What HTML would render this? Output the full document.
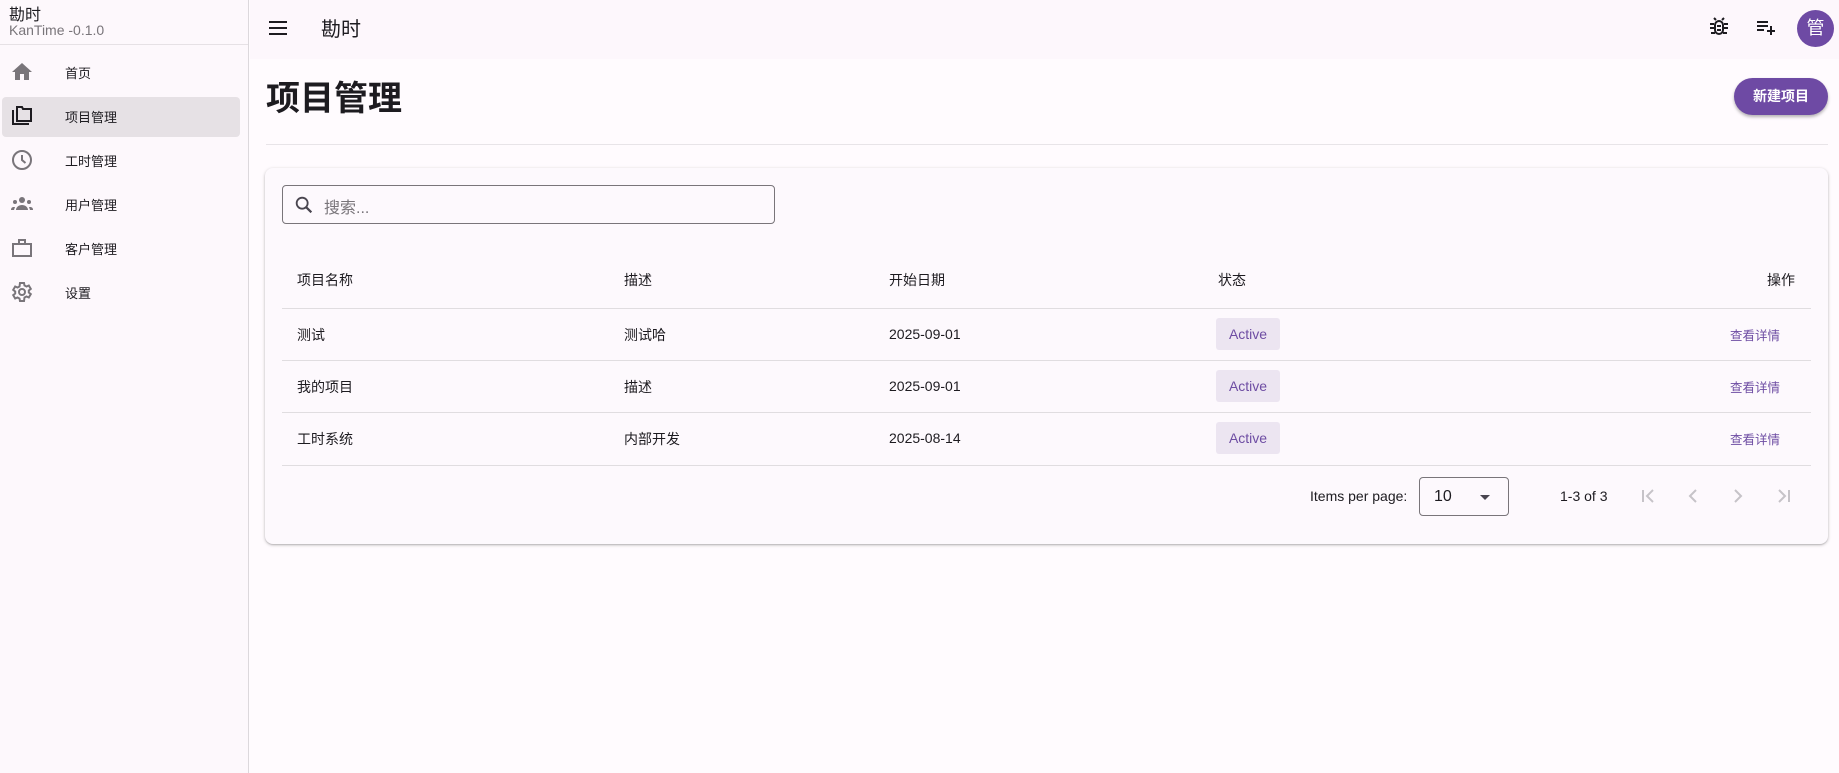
<!DOCTYPE html>
<html><head><meta charset="utf-8"><style>
*{box-sizing:border-box;margin:0;padding:0}
body{width:1839px;height:773px;overflow:hidden;background:#fffbfe;font-family:"Liberation Sans","Noto Sans CJK SC",sans-serif;color:#1d1b20;position:relative}
.side{position:absolute;left:0;top:0;width:249px;height:773px;background:#fdf8fc;border-right:1px solid #dcd8dc}
.side .t1{position:absolute;left:9px;top:1px;font-size:16px}
.side .t2{position:absolute;left:9px;top:22px;font-size:14px;color:#79757a}
.side .hr{position:absolute;left:0;top:44px;width:248px;border-top:1px solid #e6e1e5}
.nav{position:absolute;left:2px;width:238px;height:40px;border-radius:4px;font-size:13px}
.nav.act{background:#e6e1e5}
.nav svg{position:absolute;left:8px;top:7px}
.nav span{position:absolute;left:63px;top:10px}
.top{position:absolute;left:250px;top:0;right:0;height:59px;background:#fdf7fc}
.abs{position:absolute}
.card{position:absolute;left:265px;top:168px;width:1563px;height:376px;background:#fdf9fd;border-radius:8px;box-shadow:0 1px 3px rgba(0,0,0,.25),0 1px 1px rgba(0,0,0,.1)}
.line{position:absolute;left:282px;width:1529px;border-top:1px solid #e0dde0}
.cell{position:absolute;font-size:14px}
.chip{position:absolute;left:1216px;width:64px;height:32px;background:#ece5f1;border-radius:3px;color:#6e4da3;font-size:14px;text-align:center;line-height:32px}
.lnk{position:absolute;left:1730px;color:#6e4da3;font-size:12.5px}
</style></head><body>
<div class="side">
<div class="t1">勘时</div><div class="t2">KanTime -0.1.0</div><div class="hr"></div>
<div class="nav" style="top:53px"><svg width="24" height="24" viewBox="0 0 24 24"><path fill="#79757a" d="M10 20v-6h4v6h5v-8h3L12 3 2 12h3v8z"/></svg><span>首页</span></div>
<div class="nav act" style="top:97px"><svg width="24" height="24" viewBox="0 0 24 24"><path fill="none" stroke="#1d1b20" stroke-width="2" d="M3 6v14h16M7 3h5l1 2h8v12H7z"/></svg><span>项目管理</span></div>
<div class="nav" style="top:141px"><svg width="24" height="24" viewBox="0 0 24 24"><circle cx="12" cy="12" r="9" fill="none" stroke="#79757a" stroke-width="2"/><path d="M12 7v5l3.5 3" fill="none" stroke="#79757a" stroke-width="2"/></svg><span>工时管理</span></div>
<div class="nav" style="top:185px"><svg width="24" height="24" viewBox="0 0 24 24"><g fill="#79757a"><circle cx="12" cy="8" r="3"/><circle cx="5" cy="10" r="2"/><circle cx="19" cy="10" r="2"/><path d="M6 18c0-3 3-5 6-5s6 2 6 5zM1 18c0-2 1-3 3-3l1 0-1 3zM23 18c0-2-1-3-3-3h-1l1 3z"/></g></svg><span>用户管理</span></div>
<div class="nav" style="top:229px"><svg width="24" height="24" viewBox="0 0 24 24"><path fill="none" stroke="#79757a" stroke-width="2" d="M3 8h18v12H3zM9 8V4h6v4"/></svg><span>客户管理</span></div>
<div class="nav" style="top:273px"><svg width="24" height="24" viewBox="0 0 24 24"><circle cx="12" cy="12" r="3" fill="none" stroke="#79757a" stroke-width="2"/><path fill="none" stroke="#79757a" stroke-width="2" d="M10 3h4l.5 2.5 2 1 2.3-1 2 3.4-2 1.6v2l2 1.6-2 3.4-2.3-1-2 1L14 21h-4l-.5-2.5-2-1-2.3 1-2-3.4 2-1.6v-2l-2-1.6 2-3.4 2.3 1 2-1z"/></svg><span>设置</span></div>
</div>
<div class="top">
<svg class="abs" style="left:16px;top:16px" width="24" height="24" viewBox="0 0 24 24"><path d="M3 6h18M3 12h18M3 18h18" stroke="#1d1b20" stroke-width="2"/></svg>
<div class="abs" style="left:71px;top:13px;font-size:20px">勘时</div>
<svg class="abs" style="left:1457px;top:15px" width="24" height="24" viewBox="0 0 24 24"><path fill="none" stroke="#1d1b20" stroke-width="2" d="M8 10a4 4 0 0 1 8 0v5a4 4 0 0 1-8 0zM3 9h4M17 9h4M3 13h4M17 13h4M4 18h4M16 18h4M9 5l-2-2M15 5l2-2M10 11h4M10 15h4"/></svg>
<svg class="abs" style="left:1504px;top:15px" width="24" height="24" viewBox="0 0 24 24"><path d="M3 7h11M3 11h11M3 15h7M17 11v9M13 16h8" stroke="#1d1b20" stroke-width="2"/></svg>
<div class="abs" style="left:1547px;top:10px;width:37px;height:37px;border-radius:50%;background:#6e4aa4;color:#fff;font-size:18px;text-align:center;line-height:37px">管</div>
</div>
<div class="abs" style="left:266px;top:71px;font-size:34px;font-weight:bold">项目管理</div>
<div class="abs" style="left:1734px;top:78px;width:94px;height:37px;border-radius:19px;background:#6e4aa4;color:#fff;font-size:14px;font-weight:bold;text-align:center;line-height:37px;box-shadow:0 2px 3px rgba(0,0,0,.3)">新建项目</div>
<div class="abs" style="left:266px;top:144px;width:1562px;border-top:1px solid #e8e4e8"></div>
<div class="card"></div>
<div class="abs" style="left:282px;top:185px;width:493px;height:39px;border:1px solid #79757a;border-radius:4px">
<svg class="abs" style="left:10px;top:8px" width="22" height="22" viewBox="0 0 24 24"><circle cx="10" cy="10" r="6" fill="none" stroke="#49454f" stroke-width="2"/><path d="M14.5 14.5L20 20" stroke="#49454f" stroke-width="2.4"/></svg>
<div class="abs" style="left:41px;top:8px;font-size:16px;color:#79757a">搜索...</div></div>
<div class="cell" style="left:297px;top:270px">项目名称</div><div class="cell" style="left:624px;top:270px">描述</div><div class="cell" style="left:889px;top:270px">开始日期</div><div class="cell" style="left:1218px;top:270px">状态</div><div class="cell" style="left:1767px;top:270px">操作</div>
<div class="line" style="top:308px"></div><div class="line" style="top:360px"></div><div class="line" style="top:412px"></div><div class="line" style="top:465px"></div>
<div class="cell" style="left:297px;top:325px">测试</div><div class="cell" style="left:624px;top:325px">测试哈</div><div class="cell" style="left:889px;top:326px">2025-09-01</div><div class="chip" style="top:318px">Active</div><div class="lnk" style="top:325px">查看详情</div>
<div class="cell" style="left:297px;top:377px">我的项目</div><div class="cell" style="left:624px;top:377px">描述</div><div class="cell" style="left:889px;top:378px">2025-09-01</div><div class="chip" style="top:370px">Active</div><div class="lnk" style="top:377px">查看详情</div>
<div class="cell" style="left:297px;top:429px">工时系统</div><div class="cell" style="left:624px;top:429px">内部开发</div><div class="cell" style="left:889px;top:430px">2025-08-14</div><div class="chip" style="top:422px">Active</div><div class="lnk" style="top:429px">查看详情</div>
<div class="cell" style="left:1310px;top:488px;font-size:14px">Items per page:</div>
<div class="abs" style="left:1419px;top:477px;width:90px;height:39px;border:1px solid #79757a;border-radius:4px"><div class="abs" style="left:14px;top:10px;font-size:16px">10</div><div class="abs" style="left:60px;top:17px;border:5px solid transparent;border-top-color:#49454f"></div></div>
<div class="cell" style="left:1560px;top:488px">1-3 of 3</div>
<svg class="abs" style="left:1636px;top:484px" width="24" height="24" viewBox="0 0 24 24"><path d="M7 6v12M17 6l-6 6 6 6" fill="none" stroke="#c6c3c8" stroke-width="2"/></svg>
<svg class="abs" style="left:1681px;top:484px" width="24" height="24" viewBox="0 0 24 24"><path d="M15 6l-6 6 6 6" fill="none" stroke="#c6c3c8" stroke-width="2"/></svg>
<svg class="abs" style="left:1726px;top:484px" width="24" height="24" viewBox="0 0 24 24"><path d="M9 6l6 6-6 6" fill="none" stroke="#c6c3c8" stroke-width="2"/></svg>
<svg class="abs" style="left:1772px;top:484px" width="24" height="24" viewBox="0 0 24 24"><path d="M17 6v12M7 6l6 6-6 6" fill="none" stroke="#c6c3c8" stroke-width="2"/></svg>
</body></html>
